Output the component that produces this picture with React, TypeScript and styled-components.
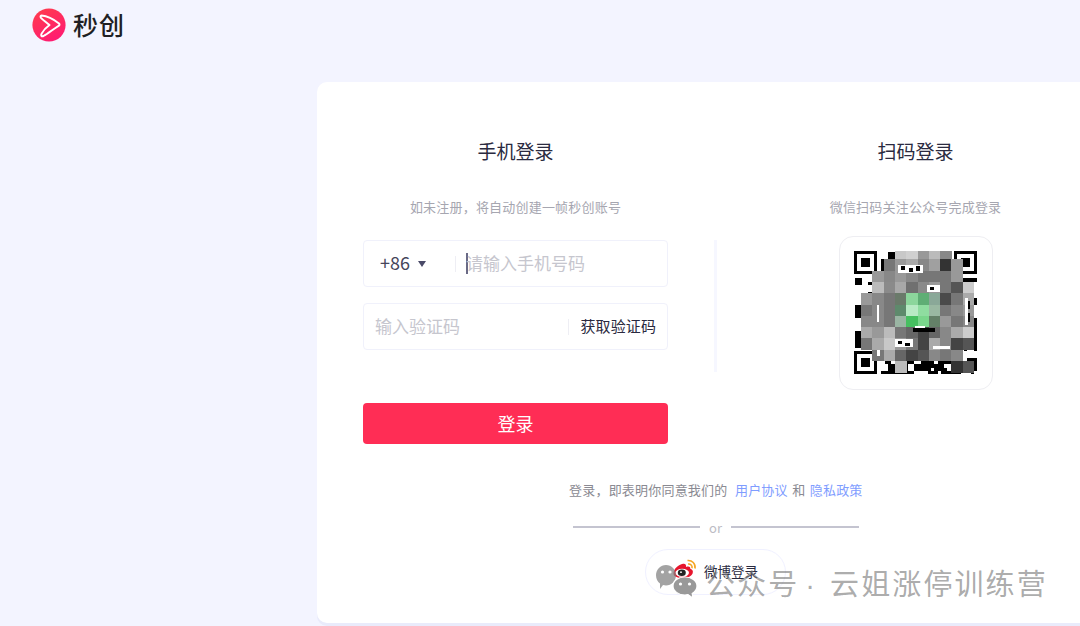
import { FC } from "react"
import styled, { createGlobalStyle } from "styled-components"

const GlobalStyle = createGlobalStyle`
  html, body {
    margin: 0;
    padding: 0;
    background: #f3f4ff;
    font-family: "Noto Sans CJK SC", "Noto Sans", sans-serif;
  }
  * { box-sizing: border-box; }
`

const Page = styled.div`
  position: relative;
  width: 1080px;
  height: 626px;
  overflow: hidden;
  background: #f3f4ff;
`
const Header = styled.header`
  height: 82px;
  padding: 8px 0 0 32px;
  display: flex;
  align-items: flex-start;
`
const Logo = styled.div`
  display: flex;
  align-items: center;
  gap: 7px;
  height: 34px;
`
const LogoText = styled.span`
  font-size: 25px;
  line-height: 32px;
  font-weight: 500;
  color: #1f1f24;
  letter-spacing: 1px;
  margin-bottom: 2px;
`
const Card = styled.main`
  width: 797px;
  height: 541px;
  margin-left: 317px;
  padding: 55px 46px 0;
  background: #fff;
  border-radius: 10px;
  box-shadow: 0 3px 0 #e9ebfb;
`
const Columns = styled.div`
  display: flex;
  justify-content: space-between;
`
const Column = styled.section`
  width: 305px;
  display: flex;
  flex-direction: column;
`
const Title = styled.h2`
  margin: 0;
  font-size: 19px;
  line-height: 28px;
  font-weight: 400;
  color: #2a2a40;
  text-align: center;
`
const Sub = styled.p`
  margin: 33px 0 0;
  font-size: 13px;
  line-height: 18px;
  letter-spacing: 0.2px;
  color: #a6a6b0;
  text-align: center;
`
const Form = styled.div`
  margin-top: 24px;
  display: flex;
  flex-direction: column;
  gap: 16px;
`
const Field = styled.div<{ $pad: number }>`
  height: 47px;
  display: flex;
  align-items: center;
  padding-left: ${(p) => p.$pad}px;
  border: 1px solid #f0f1fb;
  border-radius: 4px;
  background: #fff;
`
const Code = styled.span`
  font-size: 18px;
  color: #45455a;
  line-height: 1;
  padding-bottom: 4px;
`
const Arrow = styled.i`
  width: 0;
  height: 0;
  margin: 0 0 0 8px;
  border-left: 4px solid transparent;
  border-right: 4px solid transparent;
  border-top: 6px solid #4a4a68;
`
const Sep = styled.span<{ $gap: number }>`
  width: 1px;
  height: 16px;
  margin-left: ${(p) => p.$gap}px;
  background: #eeeef4;
  flex: none;
`
const Caret = styled.span`
  width: 2px;
  height: 21px;
  margin: 0 -2px 0 10px;
  background: #6a6a85;
  flex: none;
`
const TextInput = styled.input`
  flex: 1;
  min-width: 0;
  height: 100%;
  padding: 0 0 2px 0;
  border: 0;
  outline: 0;
  background: transparent;
  font-family: inherit;
  font-size: 17px;
  color: #333;
  &::placeholder { color: #c6c6ce; opacity: 1; }
`
const GetCode = styled.button`
  flex: none;
  padding: 0 11px 2px 11px;
  border: 0;
  background: none;
  font-family: inherit;
  font-size: 15px;
  letter-spacing: 0.1px;
  color: #2a2a40;
`
const Submit = styled.button`
  height: 41px;
  margin-top: 53px;
  padding: 0 0 2px;
  width: 100%;
  border: 0;
  border-radius: 4px;
  background: #ff2d55;
  color: #fff;
  font-family: inherit;
  font-size: 18px;
`
const Divider = styled.div`
  width: 3px;
  height: 132px;
  margin-top: 103px;
  background: #f6f7ff;
`
const QrBox = styled.div`
  width: 154px;
  height: 154px;
  margin: 20px auto 0;
  border: 1px solid #eeeef2;
  border-radius: 14px;
  display: flex;
  align-items: center;
  justify-content: center;
`
const Agreement = styled.p`
  margin: 37px 0 0;
  padding-left: 5px;
  font-size: 13px;
  line-height: 18px;
  letter-spacing: 0.2px;
  color: #8a8a92;
  text-align: center;
`
const Link = styled.a`
  color: #7f9dff;
  margin: 0 4.4px;
`
const OrRow = styled.div`
  margin: 20px auto 0;
  width: 286px;
  height: 16px;
  display: flex;
  align-items: center;
  gap: 9px;
  font-size: 13px;
  color: #bcbcc4;
`
const OrLine = styled.span`
  flex: 1;
  height: 2px;
  background: #c4c4d0;
`
const WeiboButton = styled.button`
  display: flex;
  align-items: center;
  gap: 7px;
  width: 141px;
  height: 46px;
  margin: 14px auto 0;
  padding: 0 0 3px 27px;
  border: 1px solid #f0f1ff;
  border-radius: 23px;
  background: #fff;
  font-family: inherit;
  font-size: 13.5px;
  color: #2a2a40;
`
const Watermark = styled.div`
  position: absolute;
  left: 656px;
  top: 565px;
  display: flex;
  align-items: center;
  gap: 9px;
  height: 34px;
  font-size: 29px;
  letter-spacing: 2.1px;
  color: rgba(118, 118, 118, 0.62);
  white-space: nowrap;
`
const Dot = styled.span`
  font-family: "Liberation Sans", sans-serif;
  margin: 0 13px 0 6px;
`

const LogoMark: FC = () => (
  <svg width="34" height="34" viewBox="0 0 34 34">
    <defs>
      <linearGradient id="logoFill" x1="0.2" y1="0" x2="0.7" y2="1">
        <stop offset="0" stopColor="#ff3b4e" />
        <stop offset="1" stopColor="#ff1a73" />
      </linearGradient>
    </defs>
    <circle cx="17" cy="17" r="16.6" fill="url(#logoFill)" />
    <path
      d="M9.5 7.5 C16 8 22 11.5 27 15.5 C27.8 16.3 27.6 17.2 26.6 17.8 C21.5 21 16 25.5 11.5 28 C9.5 29 8.6 27.5 9.6 25.6 C11.5 22 14 19.5 17.5 17 C14 14 11 12 9 9.8 C8.2 8.8 8.5 7.6 9.5 7.5 Z"
      fill="none"
      stroke="#fff"
      strokeWidth="2"
      strokeLinejoin="round"
    />
  </svg>
)

const hex = (v: number) => "#" + [v, v, v].map((c) => c.toString(16).padStart(2, "0")).join("")

// mosaic cells, row by row, 0 = leave the code showing through
const MOSAIC: (string | number)[][] = [
  [0, 0, 0, 200, 208, 153, 187, 136, 0, 0],
  [0, 0, 119, 153, 170, 136, 160, 51, 153, 0],
  [0, 153, 136, 153, 136, 119, 119, 119, 153, 0],
  [0, 187, 138, 168, 112, 138, 153, 119, 85, 204],
  [153, 136, 119, "#6a7a6a", "#8cd69c", "#5fae75", "#8aa898", 74, 119, 170],
  [119, 136, 119, "#5e8a6c", "#b8eac4", "#8fdda0", "#9ab8a2", 119, 136, 153],
  [136, 136, 119, "#9ab5a3", "#46bf60", "#7ad68c", "#648068", 153, 119, 136],
  [170, 153, 187, 119, 102, 68, 102, 136, 170, 204],
  [119, 170, 200, 153, 119, 68, 170, 136, 68, 85],
  [0, 119, 170, 102, 68, 85, 136, 119, 136, 0],
  [0, 0, 0, 187, 0, 0, 0, 0, 51, 85],
]

const CELL_W = 11.3
const CELL_H = 11.3
const MOD = 3.3

// the readable part of the code round the mosaic, scattered so it does not read as a hatch
const modules: [number, number][] = []
for (let r = 0; r < 37; r++) {
  for (let c = 0; c < 37; c++) {
    const inFinder = (r < 8 && c < 8) || (r < 8 && c > 28) || (r > 28 && c < 8)
    const noise = Math.abs(Math.sin(Math.floor(c / 2) * 12.9898 + Math.floor(r / 2) * 78.233) * 43758.5453) % 1
    const fine = Math.abs(Math.sin(c * 4.1 + r * 9.7) * 9631.7) % 1
    if (!inFinder && noise + fine * 0.35 > 0.55) modules.push([c, r])
  }
}

const Finder: FC<{ x: number; y: number }> = ({ x, y }) => (
  <g>
    <rect x={x} y={y} width="23" height="23" fill="#000" />
    <rect x={x + 3.3} y={y + 3.3} width="16.4" height="16.4" fill="#fff" />
    <rect x={x + 6.6} y={y + 6.6} width="9.8" height="9.8" fill="#000" />
  </g>
)

const QrCode: FC = () => (
  <svg width="124" height="124" viewBox="0 0 124 124" shapeRendering="crispEdges">
    {modules.map(([c, r]) => (
      <rect key={`${c}-${r}`} x={c * MOD + 1} y={r * MOD + 1} width={MOD} height={MOD} fill="#000" />
    ))}
    <Finder x={0} y={0} />
    <Finder x={100} y={0} />
    <Finder x={0} y={100} />
    {MOSAIC.map((row, r) =>
      row.map((v, c) =>
        v === 0 ? null : (
          <rect
            key={`m${r}-${c}`}
            x={7 + c * CELL_W}
            y={r * CELL_H - 3}
            width={CELL_W + 0.3}
            height={CELL_H + 0.3}
            fill={typeof v === "number" ? hex(v) : v}
          />
        ),
      ),
    )}
    {/* bits of the code that show through the mosaic */}
    <path d="M44 14 h25 v8 h-25 z M73 34 h13 v7 h-13 z M41 88 h18 v8 h-18 z M79 95 h17 v3 h-17 z" fill="#fff" />
    <path d="M47 15 h4 v4 h-4 z M55 17 h4 v4 h-4 z M62 15 h4 v5 h-4 z M76 36 h4 v3 h-4 z M44 90 h4 v3 h-4 z M51 92 h5 v3 h-5 z" fill="#000" />
    <path d="M23 54 h2 v17 h-2 z M111 47 h3 v27 h-3 z" fill="#fff" />
    <path d="M114 50 h2 v8 h-2 z M114 62 h2 v9 h-2 z M59 77 h22 v4 h-22 z" fill="#000" />
    <path d="M61 75 h10 v2 h-10 z M23 99 h3 v6 h-3 z" fill="#fff" />
  </svg>
)

const WeiboIcon: FC = () => (
  <svg width="24" height="23" viewBox="0 0 24 23">
    <path
      d="M0.5 14.5 C0.5 10 5.5 5.5 10 4.8 C12.5 4.4 13.4 5.8 13 8 C15.5 7 17.5 7.5 17.3 9.8 C19.5 10.6 20.5 12 19.6 14.4 C18.2 17.8 13.5 19.2 9 19 C4.5 18.8 0.5 17.5 0.5 14.5 Z"
      fill="#e6162d"
    />
    <ellipse cx="9.2" cy="13.8" rx="6.8" ry="4" fill="#fff" />
    <ellipse cx="8.8" cy="13.8" rx="4" ry="3.3" fill="#222" />
    <circle cx="8" cy="13.2" r="0.9" fill="#fff" />
    <path d="M14.5 1.5 C19 1 22.8 4.5 22 9.5 M15 5 C17.5 4.6 19.6 6.6 19 9.2" stroke="#f5a623" strokeWidth="1.6" fill="none" />
  </svg>
)

const WechatMark: FC = () => (
  <svg width="41" height="34" viewBox="0 0 41 34">
    <path
      d="M10 0 C15.5 0 20 4.6 20 10.3 C20 16 15.5 20.6 10 20.6 C9 20.6 8 20.4 7 20.1 L4 24 L4 18.6 C1.5 16.7 0 13.7 0 10.3 C0 4.6 4.5 0 10 0 Z"
      fill="rgba(128,128,128,0.72)"
    />
    <path
      d="M29 12 C35.4 12 41 15.9 41 21 C41 24.2 39 26.8 36.2 28.4 L36.8 33 L32 29.6 C31 29.8 30 30 29 30 C22.4 30 17 26 17 21 C17 15.9 22.4 12 29 12 Z"
      fill="rgba(128,128,128,0.8)"
      stroke="#fff"
      strokeWidth="1.2"
    />
    <circle cx="6.5" cy="7" r="1.6" fill="#fff" />
    <circle cx="14" cy="7" r="1.6" fill="#fff" />
    <circle cx="24.5" cy="19" r="1.6" fill="#fff" />
    <circle cx="33.5" cy="19" r="1.6" fill="#fff" />
  </svg>
)

export default function App() {
  return (
    <Page>
      <GlobalStyle />
      <Header>
        <Logo>
          <LogoMark />
          <LogoText>秒创</LogoText>
        </Logo>
      </Header>
      <Card>
        <Columns>
          <Column>
            <Title>手机登录</Title>
            <Sub>如未注册，将自动创建一帧秒创账号</Sub>
            <Form>
              <Field $pad={16}>
                <Code>+86</Code>
                <Arrow />
                <Sep $gap={29} />
                <Caret />
                <TextInput placeholder="请输入手机号码" />
              </Field>
              <Field $pad={11}>
                <TextInput placeholder="输入验证码" />
                <Sep $gap={0} />
                <GetCode>获取验证码</GetCode>
              </Field>
            </Form>
            <Submit>登录</Submit>
          </Column>
          <Divider />
          <Column>
            <Title>扫码登录</Title>
            <Sub>微信扫码关注公众号完成登录</Sub>
            <QrBox>
              <QrCode />
            </QrBox>
          </Column>
        </Columns>
        <Agreement>
          登录，即表明你同意我们的 <Link>用户协议</Link>和<Link>隐私政策</Link>
        </Agreement>
        <OrRow>
          <OrLine />
          or
          <OrLine />
        </OrRow>
        <WeiboButton>
          <WeiboIcon />
          微博登录
        </WeiboButton>
      </Card>
      <Watermark>
        <WechatMark />
        <span>
          公众号<Dot>·</Dot>云姐涨停训练营
        </span>
      </Watermark>
    </Page>
  )
}
